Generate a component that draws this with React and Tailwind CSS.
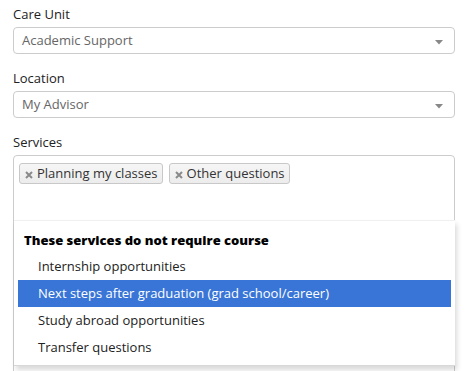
import React from "react";

const font = { fontFamily: '"Open Sans", "Liberation Sans", sans-serif' };

function Arrow() {
  return (
    <svg width="8" height="5" viewBox="0 0 8 5" className="absolute right-[11px] top-[12px]">
      <path d="M0 0 H8 L4 4.5 Z" fill="#888" />
    </svg>
  );
}

function SelectField({ label, value }) {
  return (
    <div className="mb-[14px]">
      <div className="h-[20px] leading-[20px] text-[13px] text-[#222] mb-[3px]">{label}</div>
      <div className="relative h-[27px] rounded-[4px] border border-[#ccc] bg-white pl-[8px] text-[13px] leading-[25px] text-[#666]">
        {value}
        <Arrow />
      </div>
    </div>
  );
}

function Tag({ text }) {
  return (
    <div className="flex h-[21px] items-center gap-[4px] rounded-[3px] border border-[#c8c8c8] bg-gradient-to-b from-[#f6f6f6] to-[#ececec] pl-[5px] pr-[4px] text-[13px] text-[#333]">
      <svg width="8" height="8" viewBox="0 0 8 8" className="mt-[2px]">
        <path d="M1 1 L7 7 M7 1 L1 7" stroke="#8a8a8a" strokeWidth="2" />
      </svg>
      <span className="leading-[19px]">{text}</span>
    </div>
  );
}

const options = [
  "Internship opportunities",
  "Next steps after graduation (grad school/career)",
  "Study abroad opportunities",
  "Transfer questions",
];

export default function App() {
  return (
    <div className="h-[371px] w-[476px] overflow-hidden bg-white pl-[13px] pr-[21px] pt-[4px]" style={font}>
      <SelectField label="Care Unit" value="Academic Support" />
      <SelectField label="Location" value="My Advisor" />
      <div className="h-[20px] leading-[20px] text-[13px] text-[#222] mb-[3px]">Services</div>
      <div className="relative h-[240px] border border-[#ccc] rounded-t-[4px] bg-white">
        <div className="flex gap-[6px] pl-[5px] pt-[7px]">
          <Tag text="Planning my classes" />
          <Tag text="Other questions" />
        </div>
        <div className="absolute left-0 right-[-1px] top-[64px] border-t border-[#f0f0f0] border-b border-b-[#d8d8d8] bg-white pt-[6px] pb-[4px] shadow-[2px_4px_5px_rgba(0,0,0,0.15)]">
          <div className="h-[26px] pl-[10px] text-[13px] font-extrabold leading-[26px] text-black">
            These services do not require course
          </div>
          {options.map((o, i) => (
            <div
              key={o}
              className={
                "mx-[4px] h-[27px] pl-[20px] text-[13px] leading-[27px] " +
                (i === 1 ? "bg-[#3875d7] text-white" : "text-[#222]")
              }
            >
              {o}
            </div>
          ))}
        </div>
      </div>
    </div>
  );
}
